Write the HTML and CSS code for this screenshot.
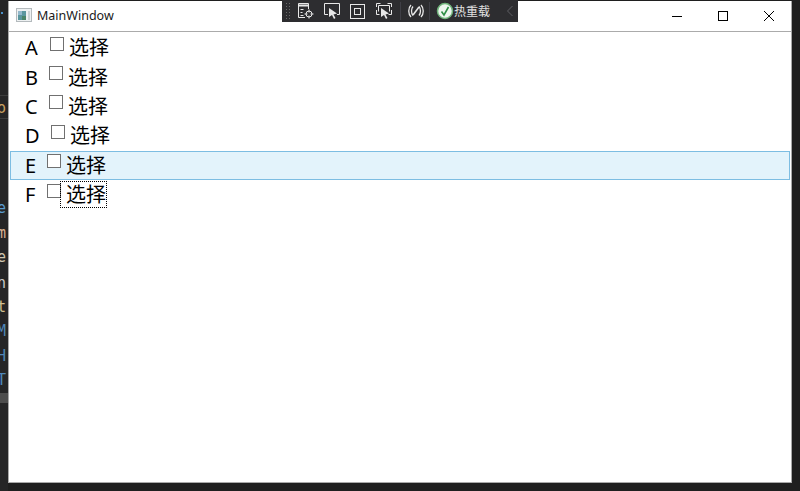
FILE: index.html
```html
<!DOCTYPE html>
<html lang="zh">
<head>
    <meta charset="UTF-8">
    <title>MainWindow</title>
    <link rel="stylesheet" href="styles.css">
</head>
<body>
    <div class="editor-strip">
        <span class="dot"></span>
        <span class="line-mark"></span>
        <span class="frag frag-o">o</span>
        <span class="frag frag-e">e</span>
        <span class="frag frag-m">m</span>
        <span class="frag frag-e2">e</span>
        <span class="frag frag-n">n</span>
        <span class="frag frag-t">t</span>
        <span class="frag frag-M">M</span>
        <span class="frag frag-H">H</span>
        <span class="frag frag-T">T</span>
        <span class="scroll-thumb"></span>
    </div>
    <div class="window">
        <header class="titlebar">
            <svg class="app-icon" width="16" height="16" viewBox="0 0 16 16">
                <rect x="0.5" y="1.5" width="15" height="13" fill="#eef1f2" stroke="#b4babd"/>
                <rect x="2" y="4" width="8" height="9" fill="#5b979f"/>
                <rect x="2" y="4" width="4" height="4" fill="#94b9cc"/>
                <rect x="6" y="9" width="4" height="4" fill="#4a8468"/>
                <rect x="12" y="4" width="2" height="9" fill="#ccd3d5"/>
            </svg>
            <span class="title">MainWindow</span>
            <div class="caption">
                <button class="cap-btn">
                    <svg width="12" height="12" viewBox="0 0 12 12"><path d="M1 6.5h10" stroke="#000" fill="none"/></svg>
                </button>
                <button class="cap-btn">
                    <svg width="12" height="12" viewBox="0 0 12 12"><rect x="1.5" y="1.5" width="9" height="9" stroke="#000" fill="none"/></svg>
                </button>
                <button class="cap-btn">
                    <svg width="12" height="12" viewBox="0 0 12 12"><path d="M1 1l10 10M11 1L1 11" stroke="#000" fill="none"/></svg>
                </button>
            </div>
        </header>
        <ul class="list">
            <li class="row row-a"><span class="letter">A</span><span class="check"></span><span class="label">选择</span></li>
            <li class="row row-b"><span class="letter">B</span><span class="check"></span><span class="label">选择</span></li>
            <li class="row row-c"><span class="letter">C</span><span class="check"></span><span class="label">选择</span></li>
            <li class="row row-d"><span class="letter">D</span><span class="check"></span><span class="label">选择</span></li>
            <li class="row row-e hover"><span class="letter">E</span><span class="check"></span><span class="label">选择</span></li>
            <li class="row row-f"><span class="letter">F</span><span class="check"></span><span class="label focus">选择</span></li>
        </ul>
    </div>
    <div class="debug-bar">
        <span class="grip"></span>
        <svg class="tool" width="18" height="18" viewBox="0 0 18 18" fill="none" stroke="#e8e8e8">
            <path d="M8 15.5H1.5V1.5h10V7"/><path d="M1.5 3.5h10" stroke-width="2"/><path d="M3.5 7.5h3M3.5 10.5h2M3.5 13.5h3"/>
            <circle cx="12" cy="12" r="3"/><path d="M12 7.5v3M12 13.5v3M7.500 12h3M13.5 12h3"/>
        </svg>
        <svg class="tool" width="18" height="18" viewBox="0 0 18 18" fill="none" stroke="#e8e8e8">
            <path d="M5 12.5H1.5v-11h15v11H14"/>
            <path d="M6 6l8 5.5-3.5 1 2 3.500-1.500 1-2-4L6 15z" fill="#e8e8e8" stroke="none"/>
        </svg>
        <svg class="tool" width="18" height="18" viewBox="0 0 18 18" fill="none" stroke="#e8e8e8">
            <rect x="1.5" y="2.5" width="14" height="14"/><rect x="5.5" y="6.5" width="6" height="6"/>
        </svg>
        <svg class="tool" width="18" height="18" viewBox="0 0 18 18" fill="none" stroke="#e8e8e8">
            <path d="M1.5 5V1.5h4M12.5 1.5h4V5M16.5 8v4.500h-3M1.5 8v4.500h3M3.5 3.5h11v6M3.5 3.5v6"/>
            <path d="M6 6l8 5.500-3.500 1 2 3.500-1.500 1-2-4L6 15z" fill="#e8e8e8" stroke="none"/>
        </svg>
        <span class="sep"></span>
        <svg class="tool wave" width="18" height="18" viewBox="0 0 18 18" fill="none" stroke="#e8e8e8" stroke-width="1.3">
            <path d="M4 3C1 6 1 12 4 15M14 3c3 3 3 9 0 12M6 4.500C4 7 4 11 6 13.500M12 4.500c2 2.500 2 6.500 0 9"/>
            <path d="M6 13l6-8" stroke-width="1.600"/>
        </svg>
        <span class="sep"></span>
        <svg class="hot-icon" width="18" height="18" viewBox="0 0 18 18">
            <circle cx="9" cy="9" r="7.5" fill="#eef6ef" stroke="#6fb37a" stroke-width="1.5"/>
            <path d="M5.5 9.500l2.500 3.500 4.500-8" fill="none" stroke="#2f8f46" stroke-width="1.600"/>
        </svg>
        <span class="hot-text">热重载</span>
        <svg class="collapse" width="8" height="12" viewBox="0 0 8 12"><path d="M6.5 1L1.500 6l5 5" fill="none" stroke="#5e5e62"/></svg>
    </div>
</body>
</html>
```

FILE: styles.css
```css
* {
    box-sizing: border-box;
}
html, body {
    margin: 0;
    padding: 0;
    width: 800px;
    height: 491px;
    overflow: hidden;
}
body {
    background-color: #1f1f1f;
    font-family: "Segoe UI", "Noto Sans", "Noto Sans CJK SC", sans-serif;
    position: relative;
}
.editor-strip {
    position: absolute;
    left: 0;
    top: 0;
    width: 8px;
    height: 491px;
    overflow: hidden;
    background-color: #252526;
    font-family: "DejaVu Sans Mono", monospace;
    font-size: 15px;
    line-height: 20px;
}
.dot {
    position: absolute;
    left: 1px;
    top: 12px;
    width: 2px;
    height: 2px;
    background-color: #4a90c8;
}
.line-mark {
    position: absolute;
    left: 0;
    top: 95px;
    width: 8px;
    height: 24px;
    border-top: 1px solid #3c3c3c;
    border-bottom: 1px solid #3c3c3c;
}
.frag {
    position: absolute;
    left: -3px;
    color: #9cdcfe;
}
.frag-o { top: 98px; color: #c8a060; }
.frag-e { top: 198px; color: #5a9bd0; }
.frag-m { top: 223px; color: #d8b090; }
.frag-e2 { top: 247px; color: #cfc6b0; }
.frag-n { top: 273px; color: #c8c8c8; }
.frag-t { top: 297px; color: #d0c090; }
.frag-M { top: 321px; color: #4f86b8; }
.frag-H { top: 346px; color: #4f86b8; }
.frag-T { top: 370px; color: #4f86b8; }
.scroll-thumb {
    position: absolute;
    left: 0;
    top: 393px;
    width: 8px;
    height: 10px;
    background-color: #4d4d4d;
}
.window {
    position: absolute;
    left: 8px;
    top: 1px;
    width: 784px;
    height: 482px;
    background-color: #fff;
    border: 1px solid #a9a9a9;
    border-top: none;
}
.titlebar {
    height: 31px;
    display: flex;
    align-items: center;
    padding-left: 7px;
    border-bottom: 1px solid #ababab;
}
.app-icon {
    margin-right: 5px;
    margin-top: -2px;
}
.title {
    font-size: 12.5px;
    color: #1a1a1a;
    margin-top: -2px;
}
.caption {
    margin-left: auto;
    display: flex;
    margin-right: -1px;
}
.cap-btn {
    width: 46px;
    height: 30px;
    padding: 0;
    border: none;
    background: none;
    display: flex;
    align-items: center;
    justify-content: center;
}
.list {
    list-style: none;
    margin: 0;
    padding: 1px 1px 0 1px;
}
.row {
    height: 29.4px;
    display: flex;
    align-items: center;
    font-size: 20px;
    color: #000;
    border: 1px solid transparent;
}
.row.hover {
    background-color: #e3f3fb;
    border-color: #7dbde2;
}
.letter {
    width: 36px;
    padding-left: 14px;
}
.check {
    width: 14px;
    height: 14px;
    border: 1px solid #707070;
    background-color: #fff;
    margin-top: -8px;
}
.label {
    padding-left: 5px;
    line-height: 25px;
}
.label.focus {
    outline: 1px dotted #000;
    outline-offset: 0;
}
.row-a .check { margin-left: 3px; }
.row-b .check, .row-c .check { margin-left: 2px; }
.row-d .check { margin-left: 4px; }
.debug-bar {
    position: absolute;
    left: 282px;
    top: 0;
    width: 236px;
    height: 22px;
    background-color: #2d2d30;
    display: flex;
    align-items: center;
    padding-left: 15px;
}
.grip {
    position: absolute;
    left: 3px;
    top: 2px;
    width: 6px;
    height: 18px;
    background-image: radial-gradient(#6a6a6a 0.7px, transparent 0.8px);
    background-size: 3px 3px;
}
.tool {
    margin-right: 8px;
    flex: none;
}
.tool.wave {
    margin: 0 5px 0 6px;
}
.sep {
    width: 1px;
    height: 18px;
    background-color: #3f3f46;
    flex: none;
}
.tool + .sep {
    margin-left: -1px;
}
.hot-icon {
    margin-left: 6px;
    flex: none;
}
.hot-text {
    font-size: 12px;
    color: #e0e0e0;
}
.collapse {
    margin-left: 16px;
}
```
